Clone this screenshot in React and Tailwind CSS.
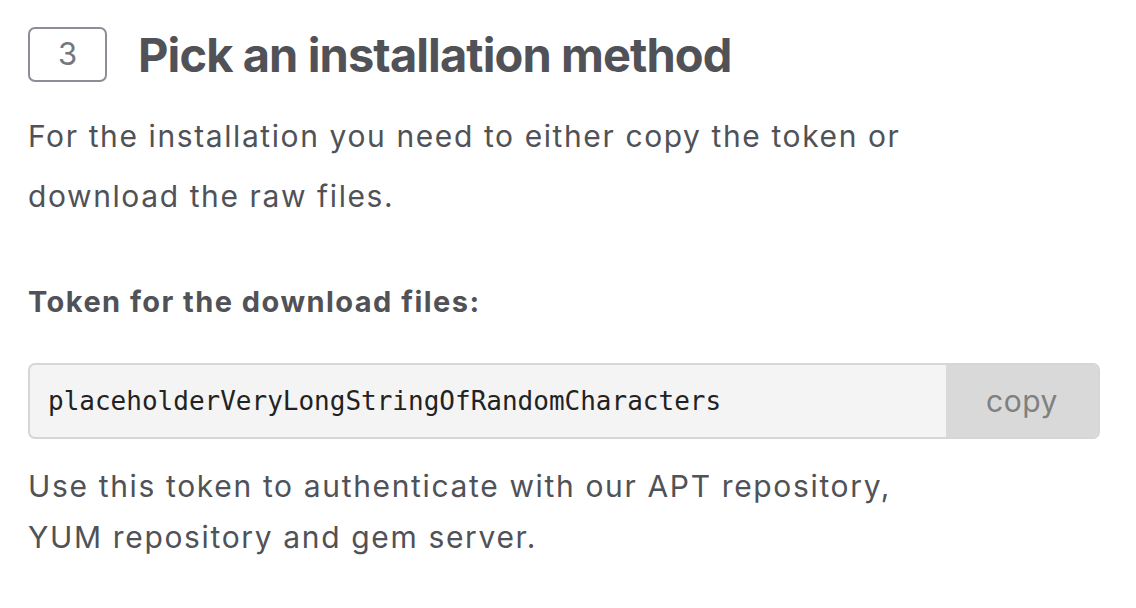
export default function App() {
  return (
    <div className="w-[1136px] h-[608px] bg-white overflow-hidden pl-[28px] pt-[27px] text-[#505257]" style={{ fontFamily: 'Inter, "Noto Sans", sans-serif' }}>
      <div className="flex items-center">
        <div className="w-[79px] h-[55px] border-2 border-[#8b8e97] rounded-[7px] flex items-center justify-center text-[31px] text-[#74777f]">
          3
        </div>
        <h1 className="ml-[31px] text-[47px] font-bold tracking-[-0.9px] leading-none text-[#505257]">
          Pick an installation method
        </h1>
      </div>
      <p className="mt-[24px] text-[30px] leading-[60px] tracking-[1.6px] w-[920px]">
        For the installation you need to either copy the token or download the raw files.
      </p>
      <div className="mt-[55px] text-[29px] leading-[42px] font-bold tracking-[1.45px]">Token for the download files:</div>
      <div className="mt-[40px] w-[1072px] h-[76px] flex border-2 border-[#d6d6d6] rounded-[7px] overflow-hidden bg-[#f4f4f4]">
        <div className="flex-1 flex items-center pl-[18px] text-[26px] text-[#222]" style={{ fontFamily: '"DejaVu Sans Mono", monospace' }}>
          placeholderVeryLongStringOfRandomCharacters
        </div>
        <div className="w-[152px] bg-[#d9d9d9] flex items-center justify-center text-[30px] tracking-[0.5px] text-[#808080]">copy</div>
      </div>
      <p className="mt-[22px] text-[30px] leading-[51px] tracking-[1.65px] w-[900px]">
        Use this token to authenticate with our APT repository, YUM repository and gem server.
      </p>
    </div>
  );
}
